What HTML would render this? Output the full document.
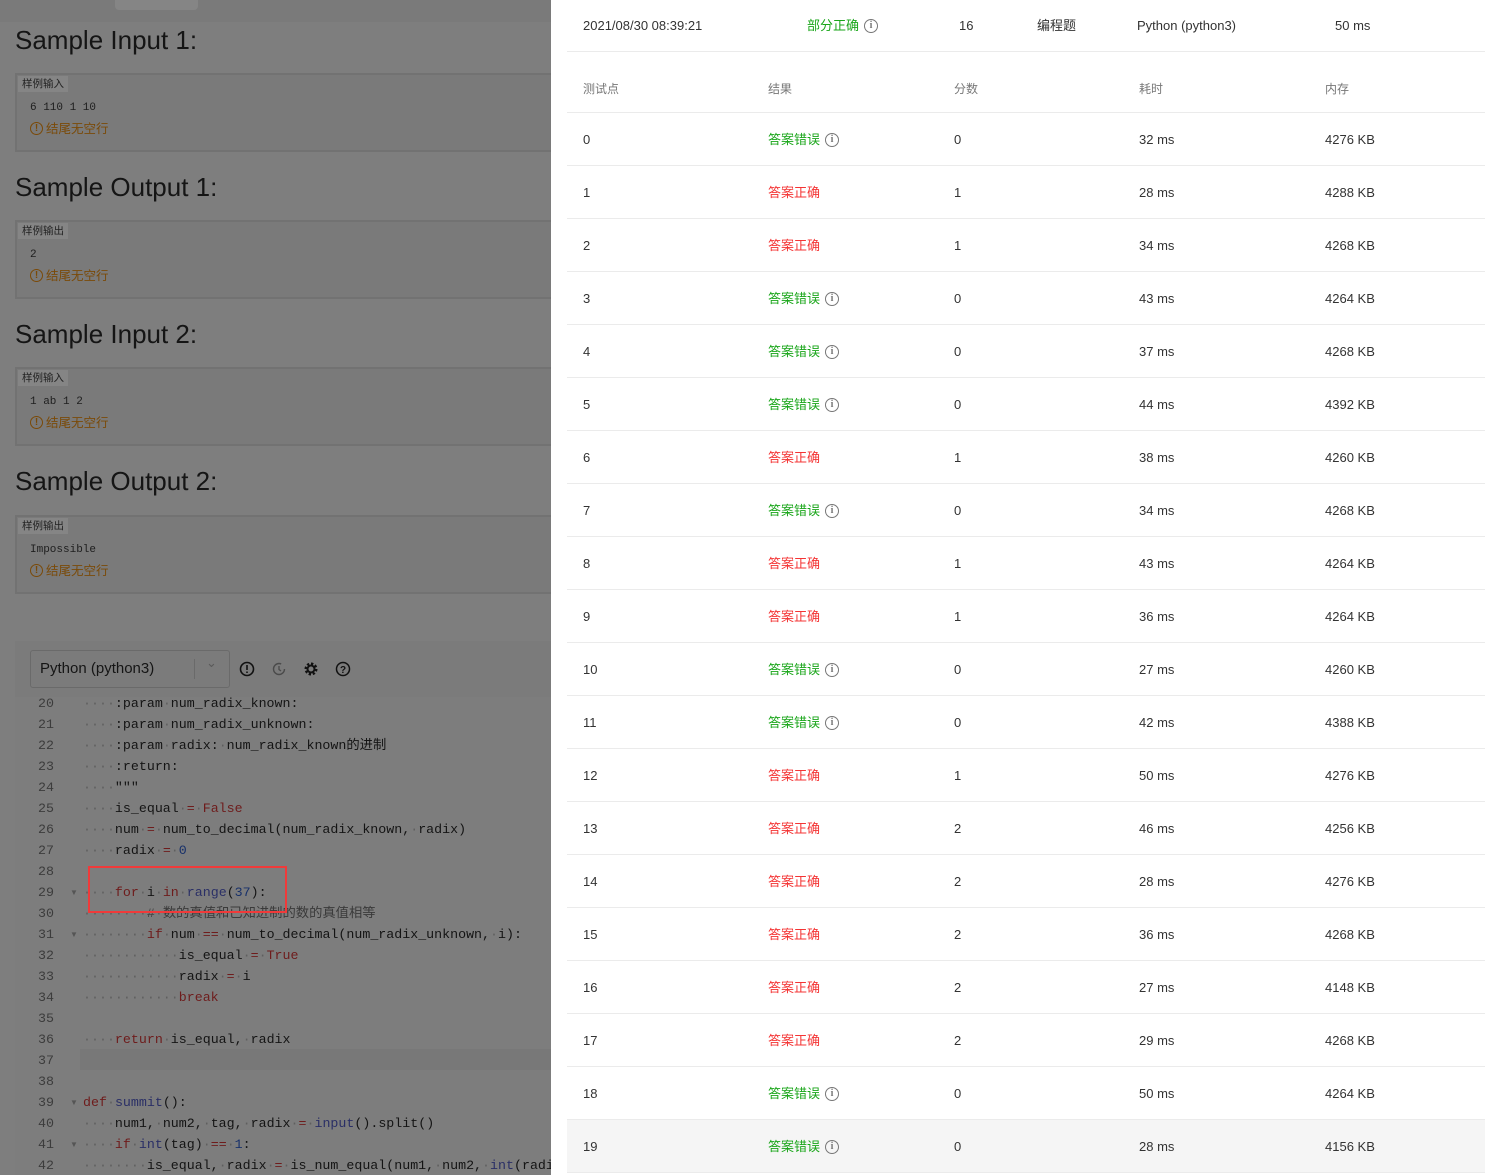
<!DOCTYPE html>
<html><head><meta charset="utf-8"><style>
*{margin:0;padding:0;box-sizing:border-box}
body{width:1485px;height:1175px;overflow:hidden;position:relative;background:#7e7e7e;font-family:"Liberation Sans","Noto Sans CJK SC",sans-serif}
.a{position:absolute;white-space:nowrap}
.h{font-size:26px;line-height:30px;color:#151515;left:15px}
.box{position:absolute;left:15px;width:540px;height:79px;background:#7a7a7a;border:2px solid #727272;border-right:none}
.tag{position:absolute;left:1px;top:1px;background:#858585;font-size:10.5px;color:#222;padding:0 4px;height:16px;line-height:16px}
.val{position:absolute;left:13px;top:26px;font:11px/14px "Liberation Mono",monospace;color:#1e1e1e}
.warn{position:absolute;left:13px;top:46px;font-size:12.5px;line-height:16px;color:#7a4a08}
.warn i{display:inline-block;width:13px;height:13px;border:1.4px solid #7a4a08;border-radius:50%;font-style:normal;font-size:10px;text-align:center;line-height:11px;font-weight:bold;margin-right:3px;vertical-align:top;margin-top:1px}
.code{position:absolute;left:15px;top:641px;width:540px;height:534px;background:#7d7d7d}
.tb{position:absolute;left:15px;top:641px;width:540px;height:56px;background:#7b7b7b}
.ln{position:absolute;left:20px;width:34px;text-align:right;font:13.3px/17px "Liberation Mono",monospace;color:#3c3c3c}
.cl{position:absolute;left:83px;font:13.3px/17px "Liberation Mono","Noto Sans CJK SC",monospace;color:#141414;white-space:pre}
.k{color:#6e1c1c}.n{color:#17306a}.d{color:#5f5f5f}.f{color:#2a2f66}
.right{position:absolute;left:551px;top:0;width:934px;height:1175px;background:#fff}
.t{position:absolute;font-size:13px;line-height:16px;height:16px;color:#333;white-space:nowrap}
.g{color:#1aa61a}.r{color:#f43434}
.line{position:absolute;left:567px;width:918px;height:1px;background:#ebebeb}
.ic{display:inline-block;width:14px;height:14px;border:1.2px solid #777;border-radius:50%;font-size:10px;color:#777;text-align:center;line-height:12px;margin-left:5px;vertical-align:top;margin-top:1px;font-family:"Liberation Serif",serif;font-weight:bold}
</style></head><body>
<div class="a" style="left:0;top:0;width:551px;height:22px;background:#7a7a7a"></div>
<div class="a" style="left:115px;top:0;width:83px;height:10px;background:#858585;border-radius:0 0 4px 4px"></div>

<div class="a h" style="top:25px">Sample Input 1:</div>
<div class="box" style="top:73px"><div class="tag">样例输入</div><div class="val">6 110 1 10</div><div class="warn"><i>!</i>结尾无空行</div></div>
<div class="a h" style="top:172px">Sample Output 1:</div>
<div class="box" style="top:220px"><div class="tag">样例输出</div><div class="val">2</div><div class="warn"><i>!</i>结尾无空行</div></div>
<div class="a h" style="top:319px">Sample Input 2:</div>
<div class="box" style="top:367px"><div class="tag">样例输入</div><div class="val">1 ab 1 2</div><div class="warn"><i>!</i>结尾无空行</div></div>
<div class="a h" style="top:466px">Sample Output 2:</div>
<div class="box" style="top:515px"><div class="tag">样例输出</div><div class="val">Impossible</div><div class="warn"><i>!</i>结尾无空行</div></div>

<div class="code"></div>
<div class="tb"></div>
<div class="a" style="left:30px;top:650px;width:200px;height:38px;border:1px solid #6a6a6a;border-radius:3px;font-size:15px;color:#151515;padding:9px 0 0 9px">Python (python3)<span style="position:absolute;left:163px;top:8px;width:1px;height:20px;background:#6a6a6a"></span><span style="position:absolute;left:175px;top:4px;color:#5a5a5a;font-size:13px">&#8964;</span></div>
<svg class="a" style="left:238px;top:660px" width="120" height="18" viewBox="0 0 120 18">
<circle cx="9" cy="9" r="6.5" fill="none" stroke="#111" stroke-width="1.6"/><path d="M9 5v5M9 11.5v1.5" stroke="#111" stroke-width="1.6"/>
<circle cx="41" cy="9" r="5.5" fill="none" stroke="#4a4a4a" stroke-width="1.4" stroke-dasharray="28 8"/><path d="M41 6v3.5l2 1.5" stroke="#4a4a4a" stroke-width="1.3" fill="none"/>
<circle cx="73" cy="9" r="5" fill="none" stroke="#111" stroke-width="3" stroke-dasharray="2.2 1.7"/><circle cx="73" cy="9" r="3.5" fill="none" stroke="#111" stroke-width="2"/>
<circle cx="105" cy="9" r="6.5" fill="none" stroke="#111" stroke-width="1.5"/><text x="105" y="13" font-size="10" text-anchor="middle" font-family="Liberation Sans" font-weight="bold" fill="#111">?</text>
</svg>
<div class="a" style="left:80px;top:1049px;width:475px;height:21px;background:#787878"></div>

<div class="ln" style="top:695px">20</div><div class="cl" style="top:695px"><span class="d">····</span>:param<span class="d">·</span>num_radix_known:</div>
<div class="ln" style="top:716px">21</div><div class="cl" style="top:716px"><span class="d">····</span>:param<span class="d">·</span>num_radix_unknown:</div>
<div class="ln" style="top:737px">22</div><div class="cl" style="top:737px"><span class="d">····</span>:param<span class="d">·</span>radix:<span class="d">·</span>num_radix_known的进制</div>
<div class="ln" style="top:758px">23</div><div class="cl" style="top:758px"><span class="d">····</span>:return:</div>
<div class="ln" style="top:779px">24</div><div class="cl" style="top:779px"><span class="d">····</span>"""</div>
<div class="ln" style="top:800px">25</div><div class="cl" style="top:800px"><span class="d">····</span>is_equal<span class="d">·</span><span class="k">=</span><span class="d">·</span><span class="k">False</span></div>
<div class="ln" style="top:821px">26</div><div class="cl" style="top:821px"><span class="d">····</span>num<span class="d">·</span><span class="k">=</span><span class="d">·</span>num_to_decimal(num_radix_known,<span class="d">·</span>radix)</div>
<div class="ln" style="top:842px">27</div><div class="cl" style="top:842px"><span class="d">····</span>radix<span class="d">·</span><span class="k">=</span><span class="d">·</span><span class="n">0</span></div>
<div class="ln" style="top:863px">28</div>
<div class="ln" style="top:884px">29</div><div class="cl" style="top:884px"><span class="d">····</span><span class="k">for</span><span class="d">·</span>i<span class="d">·</span><span class="k">in</span><span class="d">·</span><span class="f">range</span>(<span class="n">37</span>):</div>
<div class="ln" style="top:905px">30</div><div class="cl" style="top:905px;color:#3a3a3a"><span class="d">········</span>#<span class="d">·</span>数的真值和已知进制的数的真值相等</div>
<div class="ln" style="top:926px">31</div><div class="cl" style="top:926px"><span class="d">········</span><span class="k">if</span><span class="d">·</span>num<span class="d">·</span><span class="k">==</span><span class="d">·</span>num_to_decimal(num_radix_unknown,<span class="d">·</span>i):</div>
<div class="ln" style="top:947px">32</div><div class="cl" style="top:947px"><span class="d">············</span>is_equal<span class="d">·</span><span class="k">=</span><span class="d">·</span><span class="k">True</span></div>
<div class="ln" style="top:968px">33</div><div class="cl" style="top:968px"><span class="d">············</span>radix<span class="d">·</span><span class="k">=</span><span class="d">·</span>i</div>
<div class="ln" style="top:989px">34</div><div class="cl" style="top:989px"><span class="d">············</span><span class="k">break</span></div>
<div class="ln" style="top:1010px">35</div>
<div class="ln" style="top:1031px">36</div><div class="cl" style="top:1031px"><span class="d">····</span><span class="k">return</span><span class="d">·</span>is_equal,<span class="d">·</span>radix</div>
<div class="ln" style="top:1052px">37</div>
<div class="ln" style="top:1073px">38</div>
<div class="ln" style="top:1094px">39</div><div class="cl" style="top:1094px;left:83px"><span class="k">def</span><span class="d">·</span><span class="f">summit</span>():</div>
<div class="ln" style="top:1115px">40</div><div class="cl" style="top:1115px"><span class="d">····</span>num1,<span class="d">·</span>num2,<span class="d">·</span>tag,<span class="d">·</span>radix<span class="d">·</span><span class="k">=</span><span class="d">·</span><span class="f">input</span>().split()</div>
<div class="ln" style="top:1136px">41</div><div class="cl" style="top:1136px"><span class="d">····</span><span class="k">if</span><span class="d">·</span><span class="f">int</span>(tag)<span class="d">·</span><span class="k">==</span><span class="d">·</span><span class="n">1</span>:</div>
<div class="ln" style="top:1157px">42</div><div class="cl" style="top:1157px"><span class="d">········</span>is_equal,<span class="d">·</span>radix<span class="d">·</span><span class="k">=</span><span class="d">·</span>is_num_equal(num1,<span class="d">·</span>num2,<span class="d">·</span><span class="f">int</span>(radix))</div>
<div class="a" style="left:70px;top:888px;color:#555;font-size:8px">▼</div>
<div class="a" style="left:70px;top:930px;color:#555;font-size:8px">▼</div>
<div class="a" style="left:70px;top:1098px;color:#555;font-size:8px">▼</div>
<div class="a" style="left:70px;top:1140px;color:#555;font-size:8px">▼</div>
<div class="a" style="left:88px;top:866px;width:199px;height:47px;border:2.5px solid #f03a3a"></div>

<div class="right"></div>
<div class="t" style="left:583px;top:18px">2021/08/30 08:39:21</div>
<div class="t g" style="left:807px;top:18px">部分正确<span class="ic">i</span></div>
<div class="t" style="left:959px;top:18px">16</div>
<div class="t" style="left:1037px;top:18px">编程题</div>
<div class="t" style="left:1137px;top:18px">Python (python3)</div>
<div class="t" style="left:1335px;top:18px">50 ms</div>
<div class="line" style="top:51px"></div>
<div class="t" style="left:583px;top:81px;color:#777;font-size:12px">测试点</div>
<div class="t" style="left:768px;top:81px;color:#777;font-size:12px">结果</div>
<div class="t" style="left:954px;top:81px;color:#777;font-size:12px">分数</div>
<div class="t" style="left:1139px;top:81px;color:#777;font-size:12px">耗时</div>
<div class="t" style="left:1325px;top:81px;color:#777;font-size:12px">内存</div>
<div class="line" style="top:112px"></div>
<div id="rows"></div>
<script>
var W=[1,0,0,1,1,1,0,1,0,0,1,1,0,0,0,0,0,0,1,1],S=[0,1,1,0,0,0,1,0,1,1,0,0,1,2,2,2,2,2,0,0],
T=[32,28,34,43,37,44,38,34,43,36,27,42,50,46,28,36,27,29,50,28],
M=[4276,4288,4268,4264,4268,4392,4260,4268,4264,4264,4260,4388,4276,4256,4276,4268,4148,4268,4264,4156],h='';
for(var i=0;i<20;i++){var y=113+53*i,c=y+19;
if(i==19)h+='<div class="a" style="left:567px;top:'+y+'px;width:918px;height:52px;background:#f5f5f5"></div>';
h+='<div class="t" style="left:583px;top:'+c+'px">'+i+'</div>';
h+=W[i]?'<div class="t g" style="left:768px;top:'+c+'px">答案错误<span class="ic">i</span></div>':'<div class="t r" style="left:768px;top:'+c+'px">答案正确</div>';
h+='<div class="t" style="left:954px;top:'+c+'px">'+S[i]+'</div><div class="t" style="left:1139px;top:'+c+'px">'+T[i]+' ms</div><div class="t" style="left:1325px;top:'+c+'px">'+M[i]+' KB</div><div class="line" style="top:'+(y+52)+'px"></div>';}
document.getElementById('rows').innerHTML=h;
</script>
</body></html>
